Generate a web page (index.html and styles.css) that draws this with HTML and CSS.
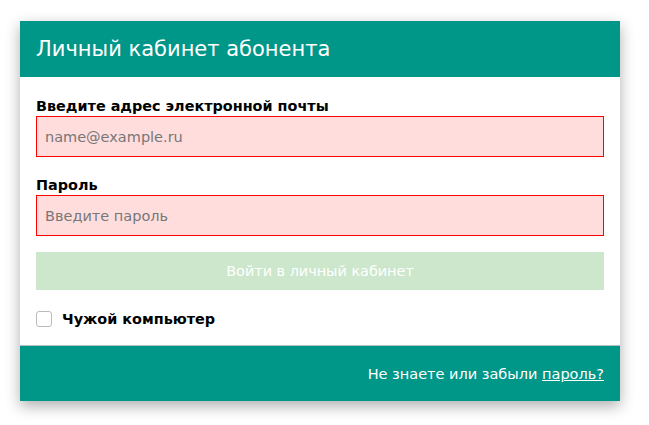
FILE: index.html
```html
<!DOCTYPE html>
<html lang="ru">
<head>
<meta charset="utf-8">
<link rel="stylesheet" href="styles.css">
</head>
<body>
<div class="card">
  <div class="card-head">Личный кабинет абонента</div>
  <form class="card-body">
    <label class="field-label" for="email">Введите адрес электронной почты</label>
    <input class="field" id="email" type="text" placeholder="name@example.ru">
    <label class="field-label second" for="pass">Пароль</label>
    <input class="field" id="pass" type="password" placeholder="Введите пароль">
    <button class="submit" type="button">Войти в личный кабинет</button>
    <label class="check">
      <span class="box"></span>
      <span class="check-text">Чужой компьютер</span>
    </label>
  </form>
  <div class="card-foot">Не знаете или забыли&nbsp;<a href="#" class="link">пароль?</a></div>
</div>
</body>
</html>
```
FILE: styles.css
```css
html, body {
  margin: 0;
  padding: 0;
  background: #fff;
}
body {
  font-family: "DejaVu Sans", Verdana, sans-serif;
  padding: 21px 29px 24px 20px;
}
.card {
  width: 600px;
  background: #fff;
  box-shadow: 0 5px 14px rgba(0, 0, 0, 0.32);
}
.card-head {
  height: 56px;
  background: #009688;
  color: #fff;
  font-size: 21px;
  line-height: 56px;
  padding-left: 16px;
}
.card-body {
  display: flex;
  flex-direction: column;
  padding: 19px 16px 18px;
  margin: 0;
}
.field-label {
  font-weight: bold;
  font-size: 14.4px;
  line-height: 20px;
  color: #000;
}
.field-label.second {
  margin-top: 18px;
}
.field {
  box-sizing: border-box;
  height: 41px;
  width: 100%;
  border: 1px solid #ff0000;
  background: #ffdddd;
  padding: 0 8px;
  font-family: "DejaVu Sans", Verdana, sans-serif;
  font-size: 14.5px;
  outline: none;
}
.field::placeholder {
  color: #777;
}
.submit {
  margin-top: 16px;
  height: 38px;
  border: none;
  background: #cce7cc;
  color: #fff;
  font-family: "DejaVu Sans", Verdana, sans-serif;
  font-size: 14.4px;
  cursor: default;
}
.check {
  display: flex;
  align-items: center;
  gap: 10px;
  margin-top: 21px;
}
.box {
  width: 14px;
  height: 14px;
  border: 1px solid #bbb;
  border-radius: 3px;
  background: #fff;
}
.check-text {
  font-weight: bold;
  font-size: 14.4px;
  color: #000;
}
.card-foot {
  height: 55px;
  border-top: 1px solid #b0c4c0;
  background: #009688;
  color: #fff;
  font-size: 14.5px;
  display: flex;
  align-items: center;
  justify-content: flex-end;
  padding-right: 16px;
}
.link {
  color: #fff;
  text-decoration: underline;
}
```
